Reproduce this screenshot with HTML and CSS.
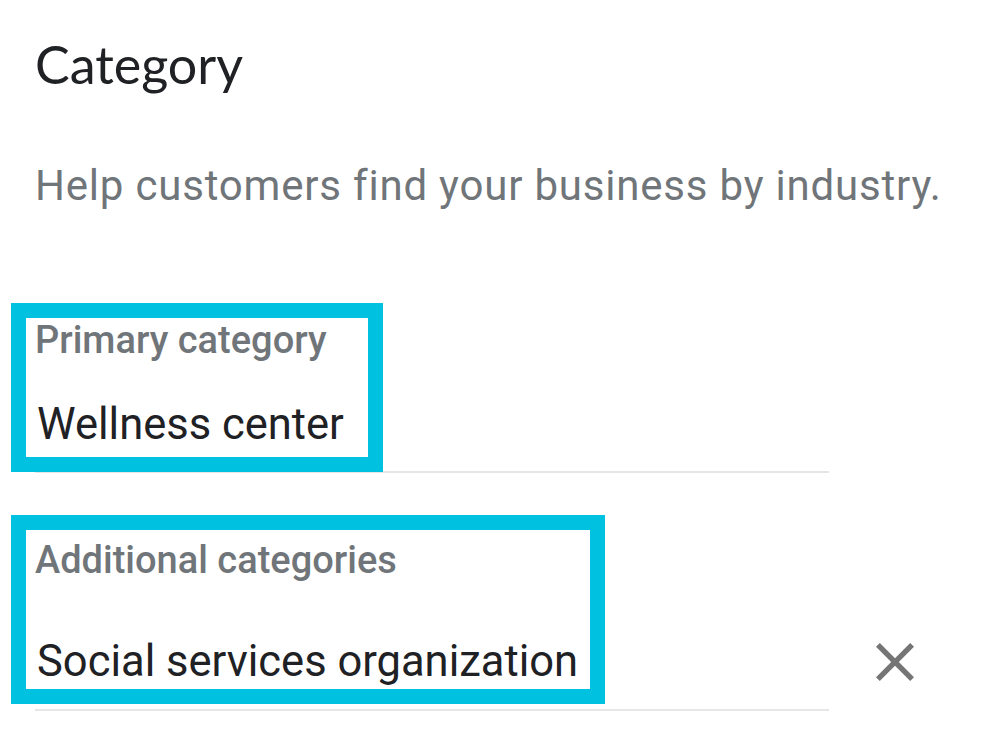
FILE: index.html
```html
<!DOCTYPE html>
<html lang="en">
<head>
<meta charset="utf-8">
<title>Category</title>
<link rel="stylesheet" href="styles.css">
</head>
<body>
<main class="page">
  <h1 class="title">Category</h1>
  <p class="subtitle">Help customers find your business by industry.</p>

  <div class="row row-primary">
    <div class="field field-primary">
      <div class="hl hl-primary">
        <div class="label">Primary category</div>
        <div class="value value-primary">Wellness center</div>
      </div>
    </div>
  </div>

  <div class="row row-additional">
    <div class="field field-additional">
      <div class="hl hl-additional">
        <div class="label label-additional">Additional categories</div>
        <div class="value value-additional">Social services organization</div>
      </div>
    </div>
    <button class="remove" aria-label="Remove category">
      <svg width="38" height="38" viewBox="5 5 14 14" aria-hidden="true">
        <path d="M19 6.41L17.59 5 12 10.59 6.41 5 5 6.41 10.59 12 5 17.59 6.41 19 12 13.41 17.59 19 19 17.59 13.41 12z" fill="#757575"/>
      </svg>
    </button>
  </div>
</main>
</body>
</html>
```

FILE: styles.css
```css
html, body {
  margin: 0;
  padding: 0;
  background: #ffffff;
}

body {
  font-family: Roboto, "Liberation Sans", sans-serif;
  color: #202124;
}

.page {
  padding-left: 35px;
  display: flex;
  flex-direction: column;
  align-items: flex-start;
}

.title {
  margin: 34px 0 0 0;
  font-family: Lato, "Open Sans", sans-serif;
  font-weight: 400;
  font-size: 52px;
  line-height: 60px;
  color: #202124;
}

.subtitle {
  margin: 68px 0 0 0;
  font-size: 42px;
  line-height: 48px;
  letter-spacing: 0.8px;
  color: #70757a;
}

.row {
  display: flex;
  align-items: flex-end;
}

.row-primary {
  margin-top: 93px;
}

.row-additional {
  margin-top: 42px;
}

.field {
  width: 794px;
  border-bottom: 2px solid #e6e6e9;
  display: flex;
  align-items: flex-end;
}

.field-additional {
  padding-bottom: 5px;
}

.hl {
  border: 15px solid #00c1e0;
  margin-left: -24px;
  padding-left: 9px;
  display: flex;
  flex-direction: column;
  align-items: flex-start;
  background: #ffffff;
}

.hl-primary {
  margin-bottom: -1px;
  padding-right: 24px;
  padding-bottom: 6px;
}

.hl-additional {
  padding-top: 8px;
  padding-right: 12px;
  padding-bottom: 1px;
}

.label {
  font-size: 38px;
  line-height: 44px;
  font-weight: 500;
  color: #70757a;
}

.value {
  font-size: 43.5px;
  line-height: 52px;
  color: #202124;
  padding-left: 2px;
}

.value-primary {
  margin-top: 37px;
}

.value-additional {
  margin-top: 54px;
}

.remove {
  margin: 0 0 25px 42px;
  width: 48px;
  height: 48px;
  padding: 0;
  border: 0;
  background: transparent;
  display: flex;
  align-items: center;
  justify-content: center;
}
```
